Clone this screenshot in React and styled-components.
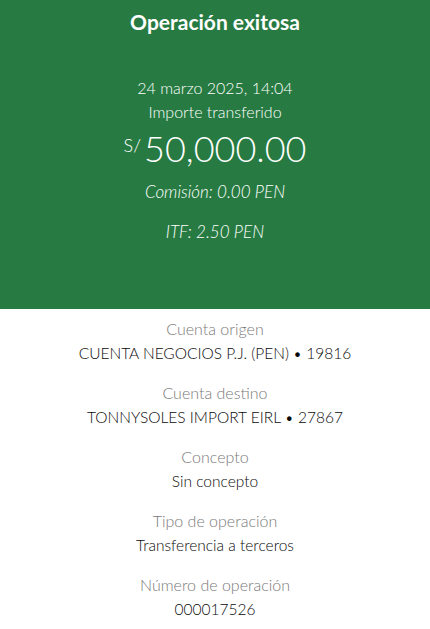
import React from 'react'
import styled, { createGlobalStyle } from 'styled-components'

const Global = createGlobalStyle`
  body {
    margin: 0;
    font-family: Lato, "Open Sans", sans-serif;
    background: #ffffff;
  }
`

const Header = styled.header`
  background: #277b42;
  color: #ffffff;
  height: 309px;
  display: flex;
  flex-direction: column;
  align-items: center;
  text-align: center;
`

const Title = styled.h1`
  margin: 0;
  padding-top: 10px;
  font-size: 21px;
  line-height: 24px;
  font-weight: 700;
`

const DateText = styled.div`
  margin-top: 42px;
  font-size: 16px;
  line-height: 24px;
  font-weight: 300;
`

const Caption = styled.div`
  font-size: 16px;
  line-height: 24px;
  font-weight: 300;
`

const Amount = styled.div`
  display: flex;
  align-items: flex-start;
  gap: 3px;
  margin-top: 2px;
  font-weight: 300;
`

const Currency = styled.span`
  font-size: 18px;
  line-height: 26px;
  margin-top: 6px;
`

const Big = styled.span`
  font-size: 36px;
  line-height: 44px;
`

const Fee = styled.div`
  margin-top: ${p => p.$gap}px;
  font-size: 17px;
  line-height: 24px;
  font-style: italic;
  font-weight: 300;
`

const Details = styled.section`
  display: flex;
  flex-direction: column;
  align-items: center;
  padding-top: 8px;
  gap: 16px;
  text-align: center;
`

const Item = styled.div`
  display: flex;
  flex-direction: column;
  align-items: center;
`

const Label = styled.div`
  font-size: 16px;
  line-height: 24px;
  color: #7a7a7a;
  font-weight: 300;
`

const Value = styled.div`
  font-size: 15.5px;
  line-height: 24px;
  color: #0a0a0a;
  font-weight: 300;
`

const rows = [
  ['Cuenta origen', 'CUENTA NEGOCIOS P.J. (PEN) • 19816'],
  ['Cuenta destino', 'TONNYSOLES IMPORT EIRL • 27867'],
  ['Concepto', 'Sin concepto'],
  ['Tipo de operación', 'Transferencia a terceros'],
  ['Número de operación', '000017526'],
]

export default function App() {
  return (
    <>
      <Global />
      <Header>
        <Title>Operación exitosa</Title>
        <DateText>24 marzo 2025, 14:04</DateText>
        <Caption>Importe transferido</Caption>
        <Amount>
          <Currency>S/</Currency>
          <Big>50,000.00</Big>
        </Amount>
        <Fee $gap={10}>Comisión: 0.00 PEN</Fee>
        <Fee $gap={16}>ITF: 2.50 PEN</Fee>
      </Header>
      <Details>
        {rows.map(([label, value]) => (
          <Item key={label}>
            <Label>{label}</Label>
            <Value>{value}</Value>
          </Item>
        ))}
      </Details>
    </>
  )
}
